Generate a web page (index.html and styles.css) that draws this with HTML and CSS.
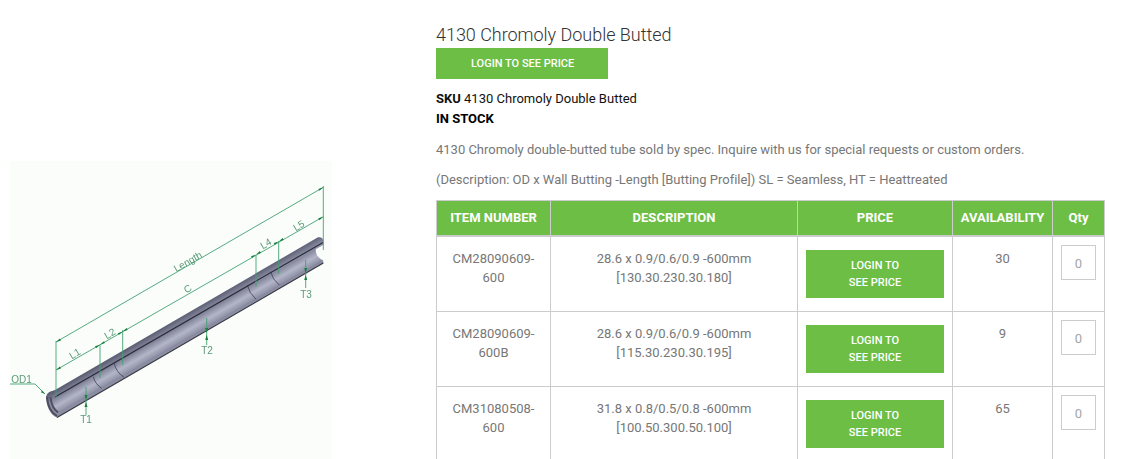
FILE: index.html
```html
<!DOCTYPE html>
<html lang="en">
<head>
<meta charset="utf-8">
<title>4130 Chromoly Double Butted</title>
<link rel="stylesheet" href="styles.css">
</head>
<body>
<main class="product">
  <div class="gallery">
    <svg class="diagram" width="322" height="298" viewBox="0 0 322 298" role="img" aria-label="Tube diagram">
      <defs>
        <linearGradient id="bore" gradientUnits="userSpaceOnUse" x1="196.700" y1="148.300" x2="205.350" y2="163.300">
          <stop offset="0" stop-color="#787a90"/>
          <stop offset="0.5" stop-color="#b3b5c8"/>
          <stop offset="0.85" stop-color="#9193a8"/>
          <stop offset="1" stop-color="#6c6e82"/>
        </linearGradient>
        <linearGradient id="wall" gradientUnits="userSpaceOnUse" x1="196.700" y1="141" x2="200.400" y2="147.300">
          <stop offset="0" stop-color="#5c5e73"/>
          <stop offset="1" stop-color="#8b8da2"/>
        </linearGradient>
      </defs>
      <rect class="paper" width="322" height="298"/>
      <g class="drawing">
        <g class="tube">
          <path class="tube-body" d="M36 236 Q37 231 42 230 L45 229 L308 76.300 Q313 75.500 313.300 80 L313.300 84 Q305 86 305.500 90 Q306 96 313.300 100.500 L313.300 102 L46.700 256.500 Q37 252 36 236 Z"/>
          <path class="tube-bore" d="M41 236.500 Q42 247 50 251 L313.300 99.500 Q306 96 305.500 90 Q305 86 313.300 84 Z"/>
          <path class="tube-ring" d="M37 236 Q38 250 47 255 M40.500 236 Q41.500 247 48 251.500"/>
          <path class="tube-edge" d="M45 236 L313 81.500"/>
          <path class="tube-lower" d="M47 256.500 L313.300 102"/>
          <path class="tube-seam" d="M83.300 215.700 Q85 223 91.700 227.300 M104.300 202.300 Q106 211 114 216.300 M237.300 124 Q239 132 246 138.300 M260.700 110.700 Q262 118 269.300 124"/>
        </g>
        <g class="dims">
          <path d="M46 180V236M313.300 25V89M90 184V217M112.700 169V204M246 94V126M268.700 80V113"/>
          <path d="M46 181L313.300 26.300M46 209L313.300 55.700"/>
          <path d="M-1 223H25L35 233M76 226V254M196.700 157V184M295.700 99V127"/>
        </g>
        <g class="arrows">
          <path d="M46 181l5-1.600-1.100-1.900zM313.300 26.300l-5 1.600 1.100 1.900zM46 209l5-1.600-1.100-1.900zM313.300 55.700l-5 1.600 1.100 1.900zM90 183.700l5-1.600-1.100-1.900zM90 183.700l-5 1.600 1.100 1.900zM112.700 170.600l5-1.600-1.100-1.900zM112.700 170.600l-5 1.600 1.100 1.900zM246 93.600l5-1.600-1.100-1.900zM246 93.600l-5 1.600 1.100 1.900zM268.700 80.500l5-1.600-1.100-1.900zM268.700 80.500l-5 1.600 1.100 1.900zM35 233l-4.200-1.800 1.600-1.600zM76 239l-1.500-5h3zM76 241l-1.500 5h3zM196.700 172l-1.500-5h3zM196.700 174l-1.500 5h3zM295.700 112l-1.500-5h3zM295.700 114l-1.500 5h3z"/>
        </g>
        <g class="labels">
          <text x="178" y="104" transform="rotate(-30 178 101)">Length</text>
          <text x="178" y="131" transform="rotate(-30 178 128)">C</text>
          <text x="65" y="196" transform="rotate(-30 65 193)">L1</text>
          <text x="100" y="176" transform="rotate(-30 100 173)">L2</text>
          <text x="256" y="86" transform="rotate(-30 256 83)">L4</text>
          <text x="289" y="68" transform="rotate(-30 289 65)">L5</text>
          <text x="76" y="262">T1</text>
          <text x="197" y="193">T2</text>
          <text x="296" y="136.500">T3</text>
          <text x="11.500" y="222">OD1</text>
        </g>
      </g>
    </svg>
  </div>
  <section class="details">
    <h1 class="title">4130 Chromoly Double Butted</h1>
    <a class="login-wide" href="#">LOGIN TO SEE PRICE</a>
    <p class="sku"><strong>SKU</strong> 4130 Chromoly Double Butted</p>
    <p class="stock">IN STOCK</p>
    <p class="desc">4130 Chromoly double-butted tube sold by spec. Inquire with us for special requests or custom orders.</p>
    <p class="desc">(Description: OD x Wall Butting -Length [Butting Profile]) SL = Seamless, HT = Heattreated</p>
    <table class="items">
      <colgroup>
        <col class="c1"><col class="c2"><col class="c3"><col class="c4"><col class="c5">
      </colgroup>
      <thead>
        <tr><th>ITEM NUMBER</th><th>DESCRIPTION</th><th>PRICE</th><th>AVAILABILITY</th><th>Qty</th></tr>
      </thead>
      <tbody>
        <tr>
          <td>CM28090609-600</td>
          <td>28.6 x 0.9/0.6/0.9 -600mm<br>[130.30.230.30.180]</td>
          <td class="price"><a class="login" href="#">LOGIN TO<br>SEE PRICE</a></td>
          <td>30</td>
          <td class="qty"><input class="qty-input" type="text" value="0" aria-label="Quantity"></td>
        </tr>
        <tr>
          <td>CM28090609-600B</td>
          <td>28.6 x 0.9/0.6/0.9 -600mm<br>[115.30.230.30.195]</td>
          <td class="price"><a class="login" href="#">LOGIN TO<br>SEE PRICE</a></td>
          <td>9</td>
          <td class="qty"><input class="qty-input" type="text" value="0" aria-label="Quantity"></td>
        </tr>
        <tr>
          <td>CM31080508-600</td>
          <td>31.8 x 0.8/0.5/0.8 -600mm<br>[100.50.300.50.100]</td>
          <td class="price"><a class="login" href="#">LOGIN TO<br>SEE PRICE</a></td>
          <td>65</td>
          <td class="qty"><input class="qty-input" type="text" value="0" aria-label="Quantity"></td>
        </tr>
      </tbody>
    </table>
  </section>
</main>
</body>
</html>
```
FILE: styles.css
```css
* { box-sizing: border-box; }
html, body { margin: 0; height: 459px; overflow: hidden; background: #fff; }
body { font-family: Roboto, "Liberation Sans", sans-serif; font-size: 13px; color: #777; }
.product { display: flex; align-items: flex-start; }
.gallery { flex: 0 0 436px; padding: 161px 0 0 10px; }
.diagram { display: block; }
.paper { fill: #fafdfa; }
.drawing { filter: blur(0.35px); }
.tube-body { fill: url(#wall); }
.tube-bore { fill: url(#bore); }
.tube-ring { fill: none; stroke: #4d4e60; stroke-width: 2; }
.tube-edge { fill: none; stroke: #2b2c3a; stroke-width: 1.2; }
.tube-lower { fill: none; stroke: #34353f; stroke-width: 1.2; }
.tube-seam { fill: none; stroke: #30313f; stroke-width: 0.7; }
.dims path { fill: none; stroke: #42a272; stroke-width: 0.9; }
.arrows path { fill: #17803f; }
.labels text { font-family: "Liberation Sans", sans-serif; font-size: 10px; fill: #5a9a76; text-anchor: middle; }
.details { flex: 0 0 669px; padding-top: 25px; }
.title { margin: 0 0 3px; font-size: 18px; font-weight: 300; line-height: 20px; color: #333; letter-spacing: -0.03px; }
.login-wide { display: block; width: 172px; height: 31px; line-height: 31px; padding-left: 35px; background: #6cbe45; color: #fff; font-size: 11px; font-weight: 500; text-decoration: none; }
.sku { margin: 10px 0 0; line-height: 20px; color: #111; }
.stock { margin: 0; line-height: 20px; color: #000; font-weight: 700; }
.desc { margin: 11px 0 0; line-height: 19px; color: #777; letter-spacing: -0.01px; }
.items { margin-top: 11px; width: 668px; table-layout: fixed; border-collapse: collapse; }
.c1 { width: 114px; }
.c2 { width: 247px; }
.c3 { width: 155px; }
.c4 { width: 100px; }
.c5 { width: 52px; }
.items th { height: 35px; padding: 0; border: 1px solid #ccc; border-bottom-width: 2px; background: #6cbe45; color: #fff; font-size: 13px; font-weight: 700; text-align: center; }
.items td { height: 75px; padding: 12px 8px 0; border: 1px solid #ccc; vertical-align: top; text-align: center; line-height: 19px; }
.items tbody tr:first-child td { height: 76px; }
.items td.price { padding: 13px 8px 0; }
.items td.qty { padding: 8px 8px 0; }
.login { display: block; width: 138px; height: 48px; padding-top: 7px; background: #6cbe45; color: #fff; font-size: 11px; font-weight: 500; line-height: 17px; text-decoration: none; }
.qty-input { display: block; width: 35px; height: 35px; margin: 0; padding: 2px 0 0; border: 1px solid #ccc; background: #fff; color: #a5a5a5; font: 13px Roboto, sans-serif; text-align: center; outline: none; }
```
